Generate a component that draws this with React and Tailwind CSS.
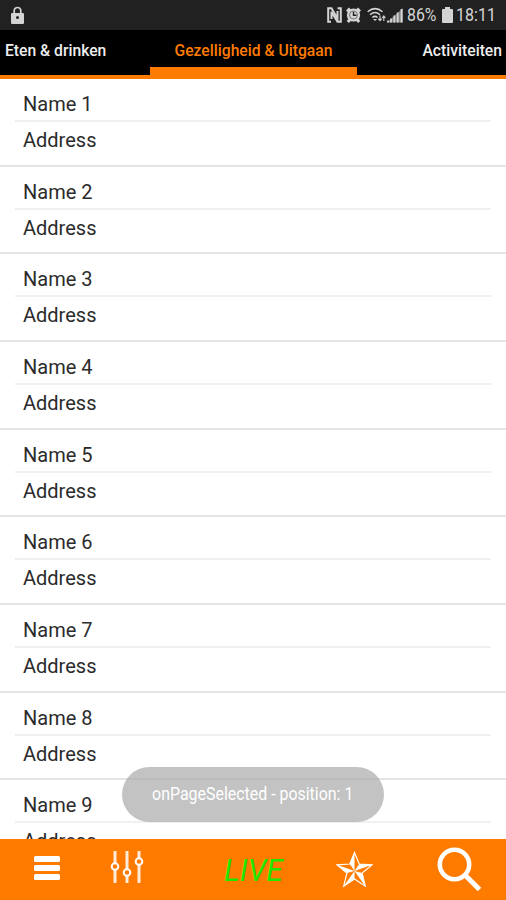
import React from 'react';

const tabs = [
  { label: 'Eten & drinken', box: 'w-[150px] pl-[5px]', text: 'text-[#eeeeee]' },
  { label: 'Gezelligheid & Uitgaan', box: 'w-[207px] justify-center', text: 'text-[#ff7b00]', active: true },
  { label: 'Activiteiten', box: 'flex-1 justify-end pr-1', text: 'text-[#eeeeee]' },
];

const places = Array.from({ length: 9 }, (_, i) => ({ name: `Name ${i + 1}`, address: 'Address' }));

function StatusBar() {
  return (
    <div className="flex h-[30px] shrink-0 items-center bg-[#212121] pl-[11px] pr-[11px] text-[#d4d4d4]">
      <svg className="h-[18px] w-[13px]" viewBox="0 0 13 18">
        <path d="M3.2 8V4.8a3.3 3.3 0 0 1 6.6 0V8" fill="none" stroke="currentColor" strokeWidth="1.7" />
        <rect y="7" width="13" height="11" rx="1.2" fill="currentColor" />
        <circle cx="6.5" cy="11.6" r="1.5" fill="#212121" />
      </svg>
      <div className="ml-auto flex items-center">
        {/* NFC */}
        <svg className="h-4 w-[15px]" viewBox="0 0 15 16" fill="none" stroke="currentColor">
          <path d="M4 14.8H1.200V1.200H4.500L10.500 11.500V4" strokeWidth="2" />
          <path d="M4.500 12V4.500M10.500 1.200h3.300v13.600h-3.300L4.500 5" strokeWidth="2" />
        </svg>
        {/* Alarm */}
        <svg className="ml-1 h-4 w-[15px]" viewBox="0 0 15 16">
          <circle cx="7.500" cy="8" r="6.600" fill="currentColor" />
          <path d="M1 4.500 4 1.500M14 4.500l-3-3M1.800 15l2.200-2.500M13.200 15l-2.200-2.500" stroke="currentColor" strokeWidth="3" />
          <circle cx="7.500" cy="8" r="4" fill="none" stroke="#212121" strokeWidth=".9" opacity=".6" />
          <path d="M7.500 4.800v3.500h3" fill="none" stroke="#212121" strokeWidth="1.400" />
        </svg>
        {/* Wifi */}
        <svg className="ml-[6px] h-4 w-[19px]" viewBox="0 0 19 16">
          <path d="M.7 4.800Q8 -1.500 15.500 4.800M3 7.700Q8 3.400 13 7.700M5.300 10.500Q8 8.300 10.500 10.500" fill="none" stroke="currentColor" strokeWidth="1.500" />
          <path d="M6 12h4l-2 2z" fill="currentColor" />
          <path d="M13 8.500v5M11.300 11.700 13 13.700l1.700-2M16.800 14V9.300M15.200 11l1.600-2 1.600 2" fill="none" stroke="currentColor" strokeWidth="1.100" />
        </svg>
        {/* Signal */}
        <svg className="ml-[1px] h-4 w-4" viewBox="0 0 16 16">
          <path d="M0 15.500 16 1v14.500z" fill="currentColor" opacity=".55" />
          <path d="M1 13.500V15.500M4 11.500v4M7.300 8.500v7M10.700 5.500v10M14.500 2v13.500" stroke="currentColor" strokeWidth="1.800" />
        </svg>
        <span className="ml-1 w-[31px] origin-left scale-x-[.88] whitespace-nowrap text-lg leading-[30px]">86%</span>
        <svg className="ml-1 h-4 w-[11px]" viewBox="0 0 11 16">
          <path d="M3 0h5v2h2a1 1 0 0 1 1 1v12a1 1 0 0 1-1 1H1a1 1 0 0 1-1-1V3a1 1 0 0 1 1-1h2z" fill="currentColor" />
        </svg>
        <span className="ml-[3px] w-[39px] origin-left scale-x-[.89] whitespace-nowrap text-lg leading-[30px]">18:11</span>
      </div>
    </div>
  );
}

function TabBar() {
  return (
    <div className="flex h-[49px] shrink-0 border-b-4 border-[#ff7b00] bg-black">
      {tabs.map((tab) => (
        <div
          key={tab.label}
          className={`flex pt-[11px] text-[15.7px] font-medium leading-5 ${tab.box} ${tab.text} ${
            tab.active ? 'border-b-8 border-[#ff7b00]' : ''
          }`}
        >
          <span className="whitespace-nowrap">{tab.label}</span>
        </div>
      ))}
    </div>
  );
}

function PlaceRow({ place }) {
  return (
    <div className="h-[87.67px] shrink-0 border-b-2 border-[#e4e4e4] text-xl leading-6 text-[#2b2b2b]">
      <div className="mx-[15px] h-[43px] border-b-2 border-[#f0f0f0] pl-2 pt-[13px]">{place.name}</div>
      <div className="pl-[23px] pt-[6px]">{place.address}</div>
    </div>
  );
}

function BottomBar() {
  return (
    <div className="flex h-[61px] shrink-0 items-start bg-[#ff7b00] text-white">
      <svg className="ml-[34px] mt-[17px] h-[25px] w-[26px]" viewBox="0 0 26 25">
        <g fill="currentColor">
          <rect width="26" height="6" rx="1.500" />
          <rect y="9" width="26" height="6" rx="1.500" />
          <rect y="18" width="26" height="6" rx="1.500" />
        </g>
      </svg>
      <svg className="ml-[50px] mt-3 h-8 w-[34px]" viewBox="0 0 34 32" fill="none" stroke="currentColor">
        <path d="M5 0v12M5 19v13M17 0v18M17 25v7M29 0v7M29 14v18" strokeWidth="3" opacity=".85" />
        <g strokeWidth="2">
          <circle cx="5" cy="15.500" r="3.300" />
          <circle cx="17" cy="21.500" r="3.300" />
          <circle cx="29" cy="10.500" r="3.300" />
        </g>
      </svg>
      <span className="ml-[80px] mt-[14px] w-[60px] origin-left scale-x-[.97] text-[31px] italic leading-9 text-[#22e600]">
        LIVE
      </span>
      <svg className="ml-[52px] mt-3 h-[37px] w-[37px]" viewBox="0 0 37 37">
        <path
          d="M18.500 1.500l4.700 11.500 12.800.8-9.900 8.300 3.200 13.100-10.800-7.200L7.700 35.200l3.200-13.100L1 13.800l12.800-.8z"
          fill="none"
          stroke="currentColor"
          strokeWidth="1.200"
        />
        <path
          d="M18.500 20V1.500L13.800 13zM18.500 20 36 13.800 23.200 13zM18.500 20l10.800 15.200-3.200-13.100zM18.500 20 7.700 35.200 18.500 28zM18.500 20 1 13.800l9.900 8.300z"
          fill="currentColor"
        />
      </svg>
      <svg className="ml-[64px] mt-2 h-[46px] w-[46px]" viewBox="0 0 46 46" fill="none" stroke="currentColor">
        <circle cx="17.500" cy="17.500" r="14.700" strokeWidth="4.500" />
        <path d="M27.500 27.500 42.500 42.500" strokeWidth="5" />
      </svg>
    </div>
  );
}

function App() {
  return (
    <div className="relative flex h-[900px] w-[506px] flex-col overflow-hidden bg-white font-['Roboto',sans-serif]">
      <StatusBar />
      <TabBar />
      <div className="flex min-h-0 flex-1 flex-col overflow-hidden">
        {places.map((place) => (
          <PlaceRow key={place.name} place={place} />
        ))}
      </div>
      <BottomBar />

      {/* Toast */}
      <div className="absolute bottom-[78px] left-[122px] flex h-[55px] w-[262px] justify-center rounded-full bg-[#aaaaaa]/70 pt-[15px] text-white">
        <span className="scale-x-[.885] whitespace-nowrap text-lg leading-6">onPageSelected - position: 1</span>
      </div>
    </div>
  );
}

export default App;
